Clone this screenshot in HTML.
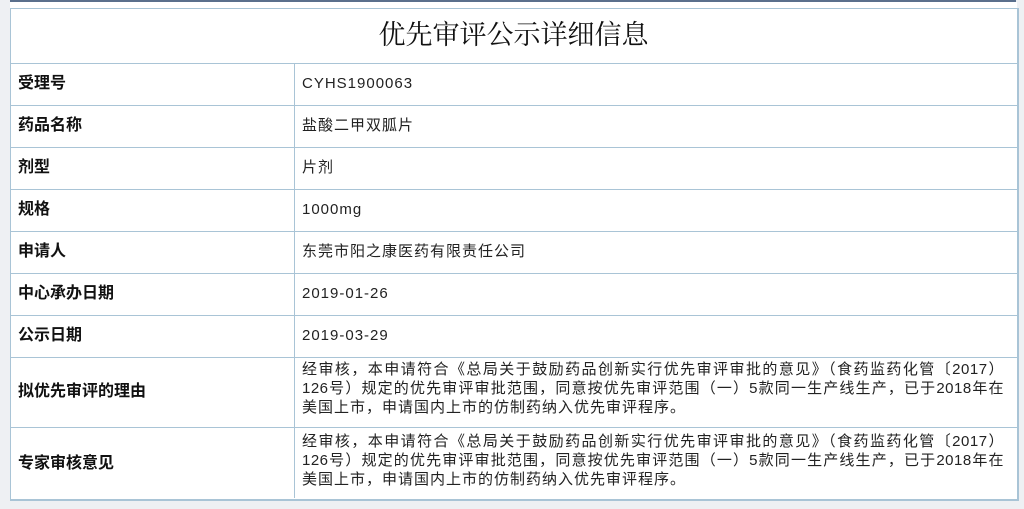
<!DOCTYPE html>
<html><head><meta charset="utf-8"><style>
body{margin:0;width:1024px;height:509px;background:#eef0f3;position:relative;overflow:hidden;font-family:"Liberation Sans","Noto Sans CJK SC",sans-serif;}
.topbar{position:absolute;left:10px;top:0;width:1006px;height:2px;background:#5a6f8c;}
.wrap{position:absolute;left:10px;top:2px;width:1007px;height:498px;background:#fff;}
.box{position:absolute;left:10px;top:8px;width:1006px;height:490px;border:1px solid #a9c4d6;border-right:2px solid #a9c4d6;border-bottom:2px solid #a9c4d6;}
.title{position:absolute;left:10px;top:8px;width:1007px;height:55px;line-height:55px;text-align:center;font-size:27px;font-weight:normal;color:#111;font-family:"Liberation Serif","Noto Serif CJK SC",serif;}
.h{position:absolute;left:10px;width:1007px;height:1px;background:#a9c4d6;}
.v{position:absolute;left:294px;top:63px;width:1px;height:435px;background:#a9c4d6;}
.l{position:absolute;left:18px;font-size:16px;line-height:20px;font-weight:bold;color:#111;}
.r{position:absolute;left:302px;font-size:15px;letter-spacing:1px;color:#222;line-height:20px;white-space:nowrap;}
.p{position:absolute;left:302px;width:702px;font-size:15px;color:#222;line-height:19px;}
.p div{text-align:justify;text-align-last:justify;white-space:nowrap;letter-spacing:0.5px}
.p div.last{text-align-last:left;letter-spacing:1px}
</style></head><body>
<div class="topbar"></div>
<div class="wrap"></div>
<div class="box"></div>
<div class="title">优先审评公示详细信息</div>
<div class="h" style="top:63px"></div>
<div class="h" style="top:105px"></div>
<div class="h" style="top:147px"></div>
<div class="h" style="top:189px"></div>
<div class="h" style="top:231px"></div>
<div class="h" style="top:273px"></div>
<div class="h" style="top:315px"></div>
<div class="h" style="top:357px"></div>
<div class="h" style="top:427px"></div>
<div class="v"></div>
<div class="l" style="top:74px">受理号</div><div class="r" style="top:74px">CYHS1900063</div>
<div class="l" style="top:116px">药品名称</div><div class="r" style="top:116px">盐酸二甲双胍片</div>
<div class="l" style="top:158px">剂型</div><div class="r" style="top:158px">片剂</div>
<div class="l" style="top:200px">规格</div><div class="r" style="top:200px">1000mg</div>
<div class="l" style="top:242px">申请人</div><div class="r" style="top:242px">东莞市阳之康医药有限责任公司</div>
<div class="l" style="top:284px">中心承办日期</div><div class="r" style="top:284px">2019-01-26</div>
<div class="l" style="top:326px">公示日期</div><div class="r" style="top:326px">2019-03-29</div>
<div class="l" style="top:382px">拟优先审评的理由</div>
<div class="p" style="top:360px"><div>经审核，本申请符合《总局关于鼓励药品创新实行优先审评审批的意见》（食药监药化管〔2017）</div><div>126号）规定的优先审评审批范围，同意按优先审评范围（一）5款同一生产线生产，已于2018年在</div><div class="last">美国上市，申请国内上市的仿制药纳入优先审评程序。</div></div>
<div class="l" style="top:454px">专家审核意见</div>
<div class="p" style="top:432px"><div>经审核，本申请符合《总局关于鼓励药品创新实行优先审评审批的意见》（食药监药化管〔2017）</div><div>126号）规定的优先审评审批范围，同意按优先审评范围（一）5款同一生产线生产，已于2018年在</div><div class="last">美国上市，申请国内上市的仿制药纳入优先审评程序。</div></div>
</body></html>
